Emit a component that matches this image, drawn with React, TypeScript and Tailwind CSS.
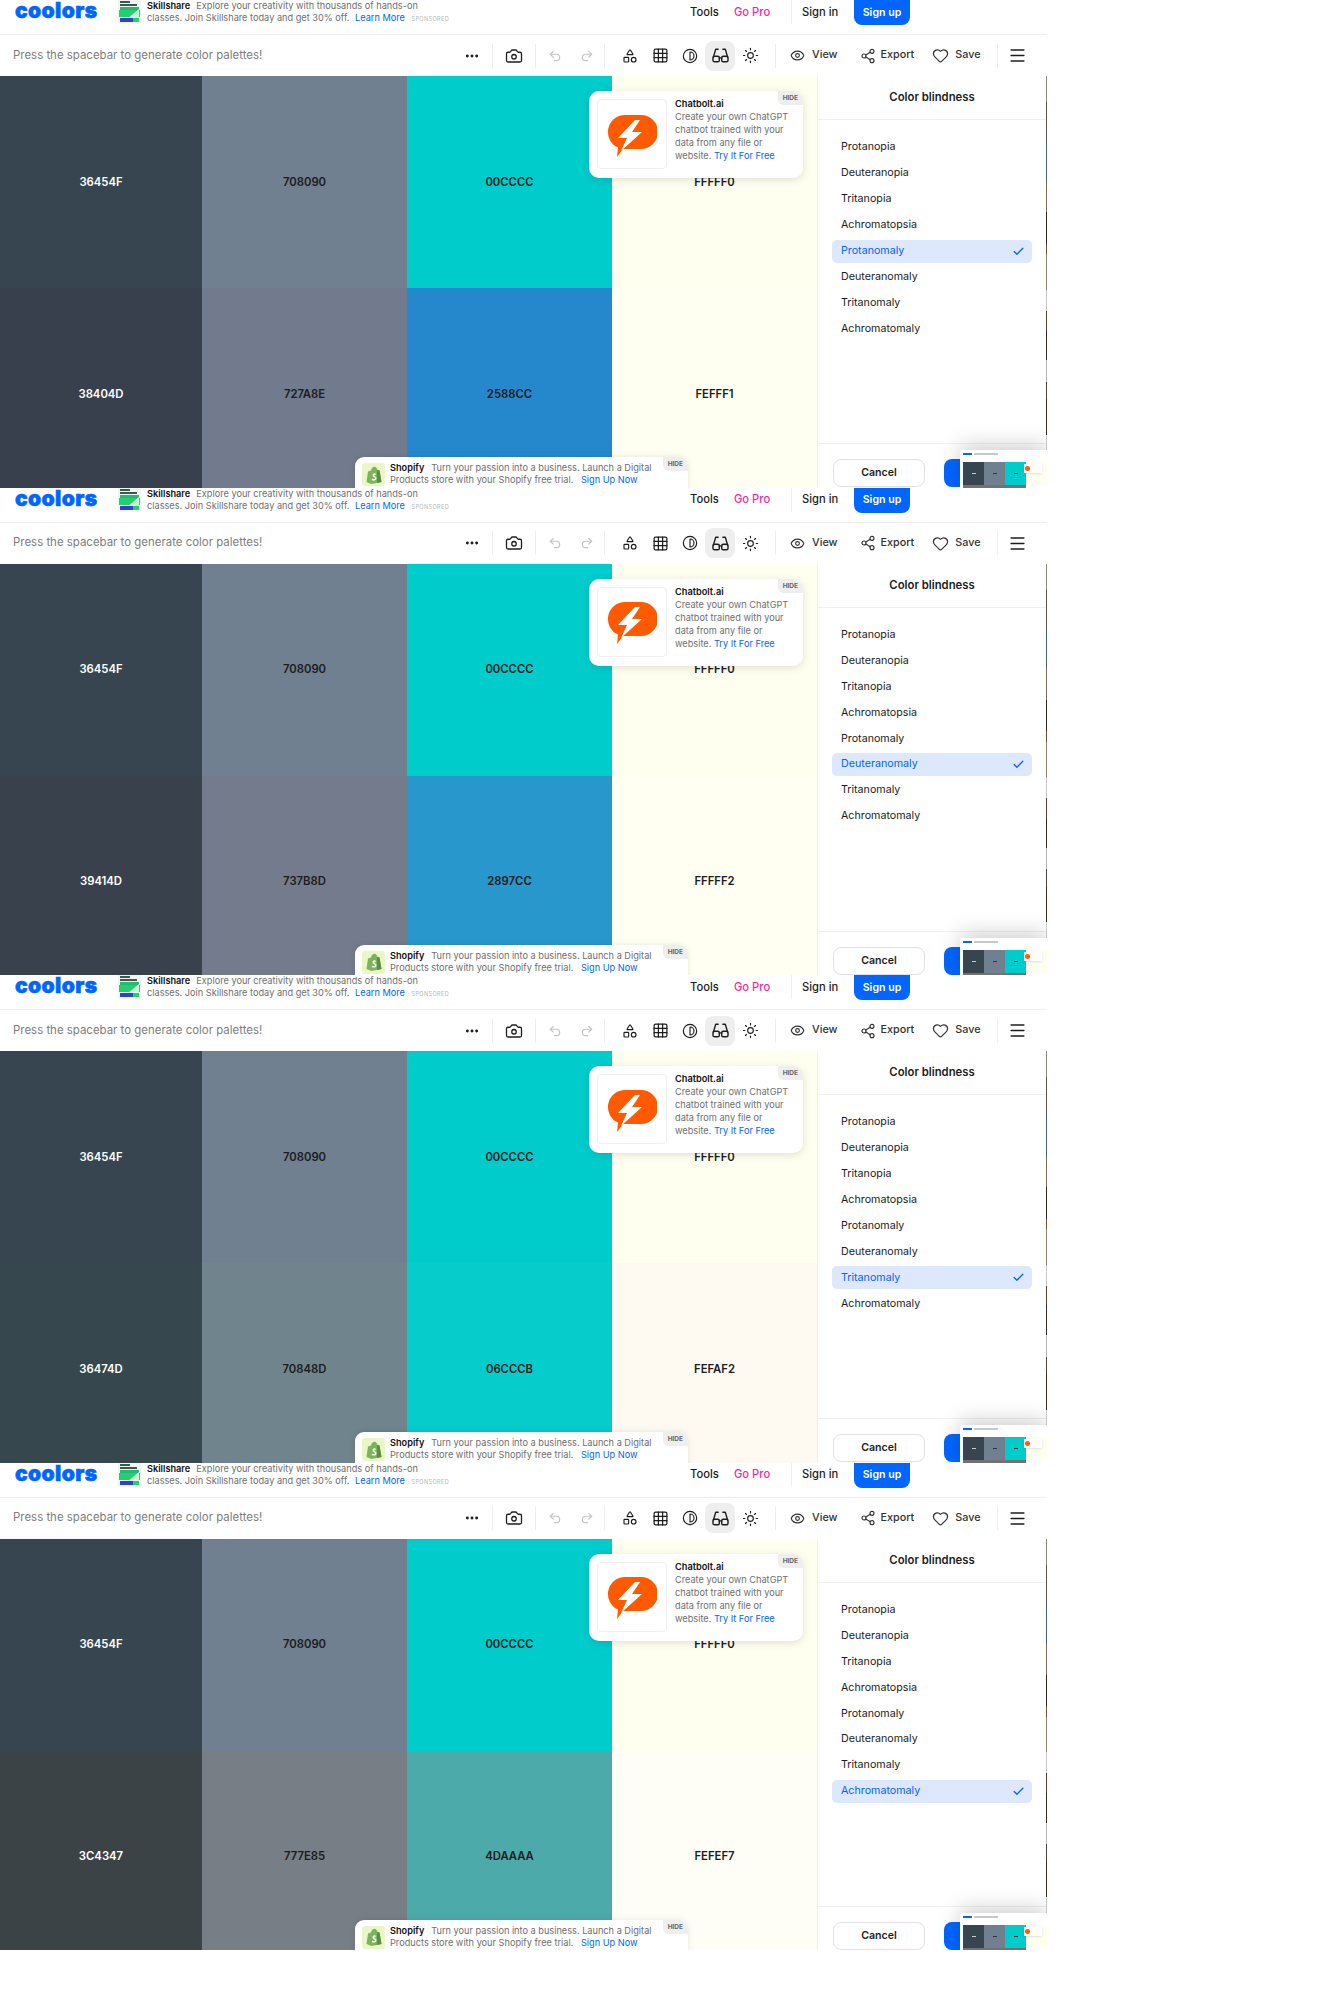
import { Camera, Check, Contrast, Ellipsis, Eye, Grid3x3, Heart, Menu, Redo2, Shapes, Share2, Sun, Undo2 } from "lucide-react";

const frames = [
  { active: "Protanomaly", bottom: ["38404D", "727A8E", "2588CC", "FEFFF1"], colors: ["bg-[#38404d]", "bg-[#727a8e]", "bg-[#2588cc]", "bg-[#feFFf1]"] },
  { active: "Deuteranomaly", bottom: ["39414D", "737B8D", "2897CC", "FFFFF2"], colors: ["bg-[#39414d]", "bg-[#737b8d]", "bg-[#2897cc]", "bg-[#fffff2]"] },
  { active: "Tritanomaly", bottom: ["36474D", "70848D", "06CCCB", "FEFAF2"], colors: ["bg-[#36474d]", "bg-[#70848d]", "bg-[#06cccb]", "bg-[#fefaf2]"] },
  { active: "Achromatomaly", bottom: ["3C4347", "777E85", "4DAAAA", "FEFEF7"], colors: ["bg-[#3c4347]", "bg-[#777e85]", "bg-[#4daaaa]", "bg-[#fefef7]"] },
];

const modes = ["Protanopia", "Deuteranopia", "Tritanopia", "Achromatopsia", "Protanomaly", "Deuteranomaly", "Tritanomaly", "Achromatomaly"];

const stripSegments = [
  "h-[30px] bg-[#8a8880]", "h-[44px] bg-[#5c5750]", "h-[46px] bg-[#47606a]", "h-[34px] bg-[#7a6a58]", "h-[36px] bg-[#2a2723]",
  "h-[12px] bg-[#6b5038]", "h-[40px] bg-[#8c8270]", "h-[24px] bg-[#c8c8c8]", "h-[22px] bg-[#5e3f34]", "h-[34px] bg-[#332c28]",
  "h-[24px] bg-[#b8b8b8]", "h-[20px] bg-[#4a4440]", "h-[40px] bg-[#3a2c20]", "h-[60px] bg-[#d0d0d0]",
];

function Swatch({ hex, bg, light }: { hex: string; bg: string; light: boolean }) {
  return (
    <div className={`flex items-center justify-center text-[11.300px] font-semibold ${bg} ${light ? "text-white" : "text-[#1c1c1c]"}`}>
      {hex}
    </div>
  );
}

function Glasses() {
  return (
    <svg width="19" height="19" viewBox="0 0 24 24" fill="none" stroke="currentColor" strokeWidth="1.8" strokeLinecap="round" strokeLinejoin="round">
      <path d="M3 14 6 4h3M21 14 18 4h-3" />
      <rect x="2.500" y="13" width="8" height="7" rx="2" />
      <rect x="13.500" y="13" width="8" height="7" rx="2" />
      <path d="M10.500 15h3" />
    </svg>
  );
}

function Bolt() {
  return (
    <svg width="50" height="44" viewBox="0 0 50 44">
      <path d="M17 1h17a17 17 0 0 1 0 34H16L10 43l1-9.500A17 17 0 0 1 17 1z" fill="#ff5a00" />
      <path d="M28 6 11 24h9l-6 13 21-19H25l8-12z" fill="#fff" />
    </svg>
  );
}

function Shopify() {
  return (
    <svg width="16" height="18" viewBox="0 0 16 18">
      <path d="M2 5.500 5 4.500C5.500 2 7 .8 8.500 .8S11 2.500 11.500 4L13.500 4.500 15.500 16 5.500 18 .5 16z" fill="#7ab55c" />
      <path d="M11 4 13.500 4.500 15.500 16 11 17z" fill="#5e8e3e" />
      <path d="M9.500 7.500C8 7 6.500 7.800 6.500 9.200 6.500 11 9 11 9 12.300 9 13.400 7.300 13.300 6 12.500L5.700 14C7.500 15 10.500 14.600 10.500 12.200 10.500 10.300 8.200 10.200 8.200 9.200 8.200 8.600 9 8.500 9.900 8.900z" fill="#fff" />
    </svg>
  );
}

function Thumb() {
  return (
    <svg width="23" height="25" viewBox="0 0 23 25">
      <rect width="23" height="25" rx="2" fill="#f2f6f0" />
      <rect x="2" y="2" width="10" height="2" fill="#3a5a50" />
      <rect x="2" y="5" width="17" height="2" fill="#3a5a50" />
      <rect x="2" y="8" width="19" height="3" fill="#2bb673" />
      <rect x="1" y="11" width="21" height="7" fill="#1fd26a" />
      <path d="M10 19 21 10v8z" fill="#c8f5d8" />
      <rect x="2" y="19" width="13" height="4" fill="#3340c8" />
      <rect x="15" y="19" width="6" height="4" fill="#1fd26a" />
    </svg>
  );
}

function Frame({ active, bottom, colors }: { active: string; bottom: string[]; colors: string[] }) {
  return (
    <div className="relative flex h-[487.5px] w-[1047px] flex-col overflow-hidden bg-white">
      <div className="flex h-[35px] shrink-0 items-start border-b border-[#efefef] whitespace-nowrap">
        <div className="ml-[15px] w-[103px] text-[21px] leading-[21px] font-black tracking-[0.4px] text-[#0066ff] [-webkit-text-stroke:0.6px_#0066ff]">coolors</div>
        <div className="mt-[-1px]"><Thumb /></div>
        <div className="ml-[6px] w-[520px] text-[9.200px] leading-[12px] text-[#6f6f6f]">
          <div><span className="mr-[6px] font-semibold text-[#111111]">Skillshare</span>Explore your creativity with thousands of hands-on</div>
          <div>classes. Join Skillshare today and get 30% off. <span className="ml-[3px] text-[#0066ff]">Learn More</span> <span className="ml-[4px] text-[5.500px] tracking-[0.4px] text-[#b5b5b5]">SPONSORED</span></div>
        </div>
        <div className="ml-[23px] flex h-[24px] w-[44px] items-center text-[11.200px] font-medium text-[#1c1c1c]">Tools</div>
        <div className="flex h-[24px] w-[57px] items-center text-[11.200px] font-medium text-[#ff1f9c]">Go Pro</div>
        <div className="h-[24px] w-px bg-[#f0f0f0]" />
        <div className="ml-[10px] flex h-[24px] w-[52px] items-center text-[11.200px] font-medium text-[#1c1c1c]">Sign in</div>
        <div className="flex h-[25px] w-[56px] items-center justify-center rounded-b-lg bg-[#0066ff] text-[10.600px] font-semibold text-white">Sign up</div>
      </div>
      <div className="flex h-[41px] shrink-0 items-center pl-[13px] whitespace-nowrap text-[#1c1c1c]">
        <div className="w-[451px] text-[11.450px] text-[#7d7d7d]">Press the spacebar to generate color palettes!</div>
        <Ellipsis size={16} strokeWidth={2.4} />
        <div className="mx-[12px] h-[24px] w-px bg-[#eeeeee]" />
        <Camera size={18} strokeWidth={1.7} />
        <div className="mx-[12px] h-[24px] w-px bg-[#eeeeee]" />
        <div className="flex items-center gap-[18px] text-[#c4c4c4]">
          <Undo2 size={14} />
          <Redo2 size={14} />
        </div>
        <div className="mx-[10px] h-[24px] w-px bg-[#eeeeee]" />
        <div className="flex items-center">
          <div className="flex h-[30px] w-[30px] items-center justify-center"><Shapes size={16} strokeWidth={1.7} /></div>
          <div className="flex h-[30px] w-[30px] items-center justify-center"><Grid3x3 size={17} strokeWidth={1.7} /></div>
          <div className="flex h-[30px] w-[30px] items-center justify-center"><Contrast size={16} strokeWidth={1.7} /></div>
          <div className="flex h-[30px] w-[30px] items-center justify-center rounded-lg bg-[#eeeeee]"><Glasses /></div>
          <div className="flex h-[30px] w-[30px] items-center justify-center"><Sun size={17} strokeWidth={1.6} /></div>
        </div>
        <div className="mx-[10px] h-[24px] w-px bg-[#eeeeee]" />
        <div className="ml-[4px] flex items-center text-[10.800px] font-medium text-[#333333]">
          <Eye size={15} strokeWidth={1.8} className="mr-[7px]" />
          <span>View</span>
          <Share2 size={16} strokeWidth={1.7} className="ml-[22px] mr-[5px]" />
          <span>Export</span>
          <Heart size={17} strokeWidth={1.7} className="ml-[18px] mr-[6px]" />
          <span>Save</span>
        </div>
        <div className="mx-[16px] h-[24px] w-px bg-[#eeeeee]" />
        <Menu size={19} strokeWidth={2} className="ml-[-6px]" />
      </div>
      <div className="flex min-h-0 flex-1">
        <div className="grid w-[817px] grid-cols-[202px_205px_205px_205px] grid-rows-[212px_212px]">
          <Swatch hex="36454F" bg="bg-[#36454f]" light />
          <Swatch hex="708090" bg="bg-[#708090]" light={false} />
          <Swatch hex="00CCCC" bg="bg-[#00cccc]" light={false} />
          <Swatch hex="FFFFF0" bg="bg-[#fffff0]" light={false} />
          {bottom.map((hex, i) => (
            <Swatch key={hex} hex={hex} bg={colors[i]} light={i === 0} />
          ))}
        </div>
        <div className="flex w-[229px] flex-col border-l border-[#f0f0f0]">
          <div className="flex h-[44px] shrink-0 items-center justify-center border-b border-[#f0f0f0] text-[11.300px] font-semibold text-[#1c1c1c]">Color blindness</div>
          <div className="flex-1 px-[14px] pt-[16px]">
            {modes.map((m) => (
              <div key={m} className={`mb-[2.900px] flex h-[23px] items-center justify-between rounded-[5px] px-[9px] text-[10.700px] ${m === active ? "bg-[#dde8fd] text-[#0066ff]" : "text-[#1c1c1c]"}`}>
                {m}
                {m === active && <Check size={13} strokeWidth={2.4} className="mr-[-2px]" />}
              </div>
            ))}
          </div>
          <div className="flex h-[44.500px] shrink-0 border-t border-[#f0f0f0] pl-[15px] pt-[15px]">
            <div className="flex h-[28px] w-[92px] items-center justify-center rounded-lg border border-[#e2e2e2] text-[10.600px] font-semibold text-[#1c1c1c]">Cancel</div>
            <div className="ml-[19px] h-[28px] w-[88px] rounded-lg bg-[#0066ff]" />
          </div>
        </div>
        <div className="flex w-px flex-col bg-[#cccccc]">
          {stripSegments.map((s, i) => <div key={i} className={s} />)}
        </div>
      </div>

      <div className="absolute left-[589px] top-[91px] flex h-[87px] w-[214px] rounded-[10px] bg-white p-[8px] shadow-[0_2px_8px_rgba(0,0,0,0.12)]">
        <div className="flex h-[70px] w-[70px] shrink-0 items-center justify-center rounded-[4px] border border-[#f0f0f0] pt-[3px]"><Bolt /></div>
        <div className="ml-[8px] mt-[-2px] text-[9.200px] leading-[13px] text-[#6f6f6f]">
          <div className="font-semibold text-[#111111]">Chatbolt.ai</div>
          Create your own ChatGPT chatbot trained with your data from any file or website. <span className="text-[#0066ff]">Try It For Free</span>
        </div>
        <div className="absolute right-0 top-0 rounded-bl-[6px] rounded-tr-[10px] bg-[#eeeeee] px-[5px] py-[3px] text-[6.500px] font-bold leading-[8px] text-[#666666]">HIDE</div>
      </div>

      <div className="absolute left-[355px] top-[457px] flex h-[40px] w-[333px] rounded-t-[9px] bg-white pl-[7px] pt-[6px] whitespace-nowrap shadow-[0_0_6px_rgba(0,0,0,0.1)]">
        <div className="flex h-[23px] w-[23px] shrink-0 items-center justify-center rounded-[3px] bg-[#eaf6c8]"><Shopify /></div>
        <div className="ml-[5px] mt-[-1px] text-[9.200px] leading-[12px] text-[#6f6f6f]">
          <div><span className="mr-[7px] font-semibold text-[#111111]">Shopify</span>Turn your passion into a business. Launch a Digital</div>
          <div>Products store with your Shopify free trial. <span className="ml-[5px] text-[#0066ff]">Sign Up Now</span></div>
        </div>
        <div className="absolute right-0 top-0 rounded-bl-[6px] rounded-tr-[9px] bg-[#eeeeee] px-[5px] py-[3px] text-[6.500px] font-bold leading-[8px] text-[#666666]">HIDE</div>
      </div>

      <div className="absolute left-[960px] top-[450px] flex h-[40px] w-[87px] flex-col rounded-tl-[2px] bg-white pl-[3px] pt-[3px] shadow-[0_-4px_22px_rgba(0,0,0,0.2)]">
        <div className="flex h-[9px] items-start gap-[2px]">
          <div className="h-[2px] w-[9px] bg-[#0066ff]" />
          <div className="h-[2px] w-[24px] bg-[#c8c8c8]" />
        </div>
        <div className="relative flex h-[23px]">
          <div className="flex w-[21px] items-center justify-center bg-[#36454f]"><div className="h-px w-[4px] bg-[#cccccc]" /></div>
          <div className="flex w-[21px] items-center justify-center bg-[#708090]"><div className="h-px w-[4px] bg-[#333333]" /></div>
          <div className="flex w-[21px] items-center justify-center bg-[#00cccc]"><div className="h-px w-[4px] bg-[#333333]" /></div>
          <div className="w-[21px] bg-[#fffff0]" />
          <div className="absolute left-[61px] top-[2px] flex h-[9px] w-[18px] items-center rounded-[1px] bg-white pl-[1px] shadow-sm"><div className="h-[5px] w-[5px] rounded-full bg-[#ff5a00]" /></div>
        </div>
        <div className="h-[3px] w-[63px] bg-[#727272]" />
      </div>
    </div>
  );
}

export default function App() {
  return (
    <div className="h-[2000px] font-['Inter',sans-serif]">
      {frames.map((f) => (
        <Frame key={f.active} active={f.active} bottom={f.bottom} colors={f.colors} />
      ))}
    </div>
  );
}
